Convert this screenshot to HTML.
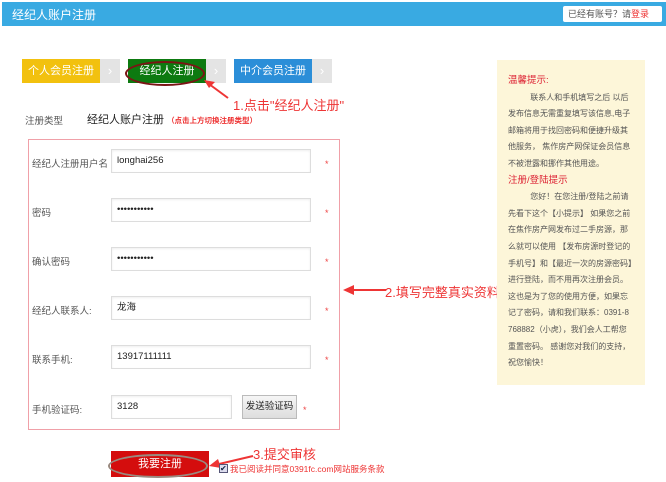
<!DOCTYPE html>
<html><head><meta charset="utf-8"><style>
*{margin:0;padding:0;box-sizing:border-box}
body{width:666px;height:482px;background:#fff;position:relative;overflow:hidden;font-family:"Liberation Sans","Noto Sans CJK SC",sans-serif;font-size:11px;color:#444}
.a{position:absolute}
.tab{height:24px;color:#fff;font-size:11px;text-align:center;line-height:24px}
.g{background:#e4e4e4;color:#fff;width:20px;height:24px;text-align:center;line-height:24px;font-size:13px}
.lbl{font-size:9.5px;color:#555}
.inp{left:111px;width:200px;height:24px;border:1px solid #ddd;background:#fff;font-size:9.5px;color:#222;padding-left:5px;line-height:22px;box-shadow:inset 0 1px 2px #eee}
.st{left:325px;color:#e44;font-size:9px}
.side{left:497px;top:60px;width:148px;height:325px;background:#fdf6d9;padding:13px 12px 0 11px;font-size:8px;line-height:16.6px;color:#555;word-break:break-all}
.side b{color:#d23;font-weight:normal;font-size:9.5px}
.red{color:#ee3535}
</style></head><body>
<div class="a" style="left:2px;top:2px;width:664px;height:24px;background:#39aae2"></div>
<div class="a" style="left:12px;top:6px;color:#fff;font-size:12px">经纪人账户注册</div>
<div class="a" style="left:563px;top:6px;width:99px;height:16px;background:#fff;border-radius:2px;font-size:9px;color:#555;line-height:16px;padding-left:5px">已经有账号？请<span style="color:#e33">登录</span></div>

<div class="a tab" style="left:22px;top:59px;width:78px;background:#f2c10f">个人会员注册</div>
<div class="a g" style="left:100px;top:59px">›</div>
<div class="a tab" style="left:128px;top:59px;width:78px;background:#0d7a10">经纪人注册</div>
<div class="a g" style="left:206px;top:59px">›</div>
<div class="a tab" style="left:234px;top:59px;width:78px;background:#2b8ed8">中介会员注册</div>
<div class="a g" style="left:312px;top:59px">›</div>
<div class="a" style="left:125px;top:61px;width:80px;height:25px;border:2px solid #7a1515;border-radius:50%"></div>
<svg class="a" style="left:200px;top:76px" width="40" height="26"><path d="M28 22 L9 8" stroke="#ee3535" stroke-width="2"/><path d="M4 4 L15 6 L9 12 Z" fill="#ee3535"/></svg>
<div class="a red" style="left:233px;top:95px;font-size:13px">1.点击"经纪人注册"</div>

<div class="a lbl" style="left:25px;top:113px">注册类型</div>
<div class="a" style="left:87px;top:111px;font-size:11px;color:#222">经纪人账户注册 <span style="color:#e33;font-size:7.5px;font-weight:bold">（点击上方切换注册类型）</span></div>

<div class="a" style="left:28px;top:139px;width:312px;height:291px;border:1px solid #f0a0a8"></div>
<div class="a lbl" style="left:32px;top:156px">经纪人注册用户名</div>
<div class="a inp" style="top:149px">longhai256</div><div class="a st" style="top:159px">*</div>
<div class="a lbl" style="left:32px;top:205px">密码</div>
<div class="a inp" style="top:198px">•••••••••••</div><div class="a st" style="top:208px">*</div>
<div class="a lbl" style="left:32px;top:254px">确认密码</div>
<div class="a inp" style="top:247px">•••••••••••</div><div class="a st" style="top:257px">*</div>
<div class="a lbl" style="left:32px;top:303px">经纪人联系人:</div>
<div class="a inp" style="top:296px">龙海</div><div class="a st" style="top:306px">*</div>
<div class="a lbl" style="left:32px;top:352px">联系手机:</div>
<div class="a inp" style="top:345px">13917111111</div><div class="a st" style="top:355px">*</div>
<div class="a lbl" style="left:32px;top:402px">手机验证码:</div>
<div class="a inp" style="top:395px;width:121px">3128</div>
<div class="a" style="left:242px;top:395px;width:55px;height:24px;border:1px solid #bbb;background:linear-gradient(#f6f6f6,#ddd);font-size:9.5px;color:#222;text-align:center;line-height:22px">发送验证码</div>
<div class="a st" style="left:303px;top:405px">*</div>

<svg class="a" style="left:340px;top:282px" width="48" height="16"><path d="M46 8 L12 8" stroke="#ee3535" stroke-width="2"/><path d="M3 8 L14 3 L14 13 Z" fill="#ee3535"/></svg>
<div class="a red" style="left:385px;top:282px;font-size:13px;white-space:nowrap">2.填写完整真实资料</div>

<div class="a side"><b>温馨提示:</b><br>&nbsp;&nbsp;&nbsp;&nbsp;&nbsp;&nbsp;&nbsp;&nbsp;&nbsp;&nbsp;联系人和手机填写之后 以后发布信息无需重复填写该信息,电子邮箱将用于找回密码和便捷升级其他服务， 焦作房产网保证会员信息不被泄露和挪作其他用途。<br><b>注册/登陆提示</b><br>&nbsp;&nbsp;&nbsp;&nbsp;&nbsp;&nbsp;&nbsp;&nbsp;&nbsp;&nbsp;您好！在您注册/登陆之前请先看下这个【小提示】 如果您之前在焦作房产网发布过二手房源，那么就可以使用 【发布房源时登记的手机号】和【最近一次的房源密码】进行登陆，而不用再次注册会员。 这也是为了您的使用方便，如果忘记了密码，请和我们联系：0391-8768882（小虎），我们会人工帮您重置密码。 感谢您对我们的支持，祝您愉快！</div>

<div class="a" style="left:111px;top:451px;width:98px;height:26px;background:#d40d0d;color:#fff;font-size:11px;text-align:center;line-height:26px">我要注册</div>
<div class="a" style="left:108px;top:454px;width:100px;height:24px;border:2px solid #9a8a80;border-radius:50%"></div>
<svg class="a" style="left:205px;top:452px" width="50" height="20"><path d="M48 4 L14 12" stroke="#ee3535" stroke-width="2"/><path d="M4 14 L13 7 L16 16 Z" fill="#ee3535"/></svg>
<div class="a red" style="left:253px;top:444px;font-size:13px">3.提交审核</div>
<div class="a" style="left:219px;top:464px;width:9px;height:9px;border:1px solid #557;background:#dde;font-size:8px;line-height:7px;color:#124">✔</div>
<div class="a" style="left:230px;top:463px;font-size:8.5px;color:#e33">我已阅读并同意0391fc.com网站服务条款</div>
</body></html>
